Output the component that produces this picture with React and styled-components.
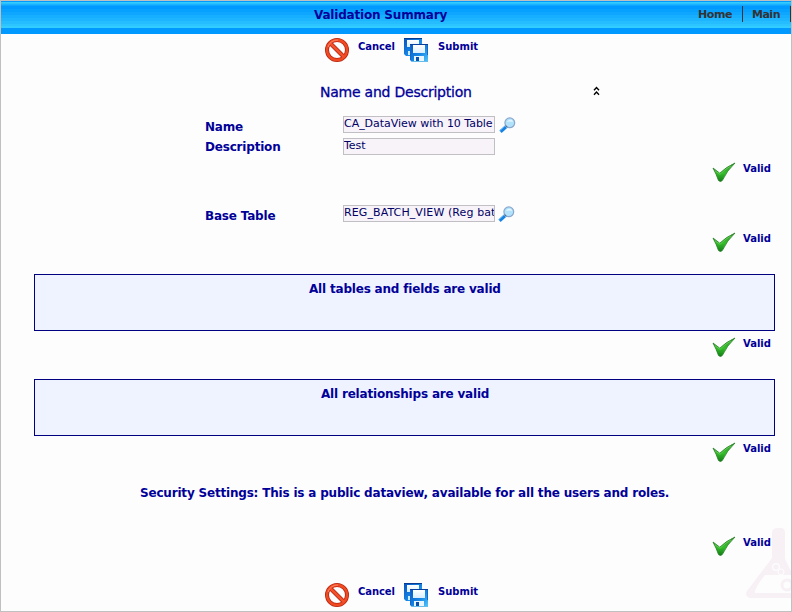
import React from "react";
import styled, { createGlobalStyle } from "styled-components";

const Global = createGlobalStyle`
  * { box-sizing: border-box; }
  body { margin: 0; background: #fdfdfd; }
`;

const Page = styled.div`
  position: relative;
  width: 792px;
  height: 612px;
  overflow: hidden;
  border: 1px solid #c0c0c0;
  background: #fdfdfd;
  color: #000099;
  font-family: "DejaVu Sans", Verdana, sans-serif;
  display: flex;
  flex-direction: column;
`;

const Header = styled.header`
  flex: none;
  height: 33px;
  display: flex;
  justify-content: space-between;
  padding-left: 313px;
  background: linear-gradient(
    #0099ff 0 1px, #33ccff 1px 2px, #2abfff 2px 3px, #1bb2ff 3px 4px, #0da5ff 4px 5px,
    #0099ff 5px 8px, #06a0ff 8px 11px, #0ea6ff 11px 14px, #16aeff 14px 17px,
    #1db5ff 17px 20px, #25bdff 20px 23px, #2cc5ff 23px 25px, #33ccff 25px 27px, #0099ff 27px 33px
  );
`;

const Text = styled.span`
  display: block;
  white-space: pre;
  font-size: ${(p) => p.$size || 12}px;
  font-weight: ${(p) => (p.$regular ? 400 : 700)};
  letter-spacing: ${(p) => p.$track ?? -0.19}px;
  line-height: 16px;
`;

const Title = styled(Text)`
  padding-top: 6px;
`;

const Nav = styled.nav`
  display: flex;
  padding-top: 5px;
  height: 21px;
  color: #333333;
`;

const NavItem = styled.a`
  display: flex;
  border-right: 1px solid #333333;
  width: ${(p) => p.$width}px;
  padding: 1px 0 0 ${(p) => p.$pad}px;
`;

const Actions = styled.div`
  flex: none;
  display: flex;
  height: 33px;
  padding: 4px 0 0 324px;
`;

const Action = styled.div`
  display: flex;
  width: 79px;
  svg { flex: none; }
`;

const ActionLabel = styled(Text)`
  margin-left: ${(p) => p.$gap}px;
  padding-top: 1px;
`;

const SectionHead = styled.div`
  flex: none;
  display: flex;
  height: 49px;
  padding: 17px 0 0 319px;
  svg { margin-top: 2px; }
`;

const SectionTitle = styled(Text)`
  width: 273px;
  -webkit-text-stroke: 0.3px #000099;
`;

const Fields = styled.div`
  flex: none;
  display: flex;
  flex-direction: column;
  gap: 5px;
  padding-left: 204px;
`;

const Field = styled.div`
  display: grid;
  grid-template-columns: 138px 152px 24px;
  height: 17px;
`;

const FieldLabel = styled(Text)`
  padding-top: ${(p) => p.$drop}px;
`;

const Input = styled.div`
  overflow: hidden;
  height: 17px;
  border: 1px solid #c0c0c4;
  background: #f8f3f8;
  color: #000066;
  padding-left: ${(p) => p.$pad || 0}px;
  ${Text} { line-height: 14px; }
`;

const Lookup = styled.span`
  padding: 1px 0 0 ${(p) => p.$left}px;
  height: 20px;
`;

const ValidRow = styled.div`
  flex: none;
  display: flex;
  height: ${(p) => p.$height}px;
  padding: ${(p) => p.$top}px 0 0 710px;
  svg { flex: none; margin-top: 1px; }
`;

const ValidLabel = styled(Text)`
  margin-left: 7px;
`;

const Panel = styled.section`
  flex: none;
  width: 741px;
  height: 57px;
  margin-left: 33px;
  padding: 6px 0 0 ${(p) => p.$left}px;
  border: 1px solid #000080;
  background: #eef3ff;
`;

const Security = styled.div`
  flex: none;
  height: 55px;
  padding: 17px 0 0 139px;
`;

const Watermark = styled.svg`
  position: absolute;
  right: 0;
  bottom: 8px;
`;

function ForbiddenIcon() {
  return (
    <svg width="24" height="24" viewBox="0 0 24 24">
      <circle cx="12" cy="12" r="10" fill="none" stroke="#b52410" strokeWidth="4" />
      <path d="M5.5 5.5 18.5 18.5" stroke="#b52410" strokeWidth="4.2" />
      <circle cx="12" cy="12" r="10" fill="none" stroke="#f04a22" strokeWidth="2.4" />
      <path d="M5 5 19 19" stroke="#f4512a" strokeWidth="2.5" />
      <path d="M3 9A9.5 9.5 0 0 1 13 2" fill="none" stroke="#ff8a68" strokeWidth="1" />
    </svg>
  );
}

function DisksIcon() {
  return (
    <svg width="24" height="24" viewBox="0 0 24 24">
      <defs>
        <linearGradient id="disk" x1="0" y1="0" x2="1" y2="1">
          <stop offset="0" stopColor="#0751c0" />
          <stop offset=".55" stopColor="#1686e4" />
          <stop offset="1" stopColor="#55c8fa" />
        </linearGradient>
        <linearGradient id="paper" x1="0" y1="0" x2="0" y2="1">
          <stop offset="0" stopColor="#ffffff" />
          <stop offset="1" stopColor="#d8edff" />
        </linearGradient>
      </defs>
      <path d="M0 0H18V18H2L0 16Z" fill="url(#disk)" />
      <path d="M0 .5H18" stroke="#063b91" />
      <path d="M3 2H15V9H3Z" fill="url(#paper)" />
      <path d="M4 13H6V17H4Z" fill="#c9edff" />
      <path d="M6 6H24V24H8L6 22Z" fill="url(#disk)" />
      <path d="M6 6.5H24" fill="none" stroke="#083f9d" />
      <path d="M6.5 7V22M23.5 7V17" stroke="#1269cc" />
      <path d="M9 7H21V15H9Z" fill="url(#paper)" />
      <path d="M10 18H20V24H10Z" fill="#e9f6ff" />
      <path d="M12 19H15V23H12Z" fill="#0751ad" />
      <path d="M8 23.5H24" stroke="#67bce9" />
    </svg>
  );
}

function MagnifierIcon() {
  return (
    <svg width="17" height="17" viewBox="0 0 17 17">
      <path d="M1.5 14.8 7 9.8" stroke="#1683e4" strokeWidth="3.3" />
      <path d="M1.2 13.7 6 9" stroke="#52aaf1" strokeWidth="1" />
      <circle cx="10.8" cy="5.8" r="4.9" fill="#b2e2fb" stroke="#8ba8ce" strokeWidth="1.2" />
      <path d="M8 5Q9 2.5 12 2.8Q14 3 14 5Q11 4 8 5Z" fill="#e2f6ff" />
      <path d="M6.6 8.5 8.4 10.2" stroke="#53657e" strokeWidth="1" />
    </svg>
  );
}

function CheckIcon() {
  return (
    <svg width="25" height="22" viewBox="0 0 25 22">
      <defs>
        <linearGradient id="check" x1="0" y1="0" x2="0" y2="1">
          <stop offset="0" stopColor="#3a9a30" />
          <stop offset=".55" stopColor="#35bd2a" />
          <stop offset="1" stopColor="#117c16" />
        </linearGradient>
      </defs>
      <path d="M2 6 8.8 11.2Q15 5 24 1Q16 8.5 11.3 18.5Q9.5 20.5 7.5 18.5Q5.5 12.5 2 6Z" fill="url(#check)" stroke="#217f20" strokeWidth=".8" />
      <path d="M4 8.8 9 12.3Q14 7.2 20 3.8" fill="none" stroke="#72d565" strokeWidth=".7" />
    </svg>
  );
}

function CollapseIcon() {
  return (
    <svg width="8" height="10" viewBox="0 0 8 10">
      <path d="M1 4.2 3.5 1.5 6 4.2M1 8.7 3.5 6 6 8.7" fill="none" stroke="#000" strokeWidth="1.4" />
    </svg>
  );
}

function ActionBar() {
  return (
    <Actions>
      <Action><ForbiddenIcon /><ActionLabel $gap={9} $size={10} $track={-0.1}>Cancel</ActionLabel></Action>
      <Action><DisksIcon /><ActionLabel $gap={10} $size={10} $track={0}>Submit</ActionLabel></Action>
    </Actions>
  );
}

function Valid({ height, top }) {
  return (
    <ValidRow $height={height} $top={top}>
      <CheckIcon />
      <ValidLabel $size={10} $track={0}>Valid</ValidLabel>
    </ValidRow>
  );
}

export default function App() {
  return (
    <>
      <Global />
      <Page>
        <Watermark width="46" height="76" viewBox="0 0 46 76">
          <path d="M27 6Q27 1 33 1H36Q40 1 40 6V32L46 44V71H5Q-1 69 2 64L27 31Z" fill="#f7f1f6" />
          <path d="M20 48H46V66H10Q9 62 20 48Z" fill="#fdfdfd" />
          <circle cx="31" cy="40" r="3.3" fill="none" stroke="#fdfdfd" strokeWidth="1.3" />
          <circle cx="36" cy="45" r="3" fill="#f7f1f6" stroke="#fdfdfd" />
          <circle cx="42" cy="58" r="5" fill="none" stroke="#f7f1f6" strokeWidth="3" />
        </Watermark>
        <Header>
          <Title>Validation Summary</Title>
          <Nav>
            <NavItem $width={45} $pad={0}><Text $size={11} $track={-0.4}>Home</Text></NavItem>
            <NavItem $width={48} $pad={9}><Text $size={11} $track={-0.5}>Main</Text></NavItem>
          </Nav>
        </Header>
        <ActionBar />
        <SectionHead>
          <SectionTitle $regular $size={14} $track={-0.23}>Name and Description</SectionTitle>
          <CollapseIcon />
        </SectionHead>
        <Fields>
          <Field>
            <FieldLabel $drop={3}>Name</FieldLabel>
            <Input $pad={0}><Text $regular $size={11} $track={-0.03}>CA_DataView with 10 Table</Text></Input>
            <Lookup $left={4}><MagnifierIcon /></Lookup>
          </Field>
          <Field>
            <FieldLabel $drop={1}>Description</FieldLabel>
            <Input><Text $regular $size={11} $track={0}>Test</Text></Input>
          </Field>
        </Fields>
        <Valid height={50} top={6} />
        <Fields>
          <Field>
            <FieldLabel $drop={3}>Base Table</FieldLabel>
            <Input $pad={0}><Text $regular $size={11} $track={0.1}>REG_BATCH_VIEW (Reg batch</Text></Input>
            <Lookup $left={3}><MagnifierIcon /></Lookup>
          </Field>
        </Fields>
        <Valid height={52} top={9} />
        <Panel $left={274}><Text>All tables and fields are valid</Text></Panel>
        <Valid height={48} top={5} />
        <Panel $left={286}><Text>All relationships are valid</Text></Panel>
        <Valid height={32} top={5} />
        <Security><Text>Security Settings: This is a public dataview, available for all the users and roles.</Text></Security>
        <Valid height={56} top={12} />
        <ActionBar />
      </Page>
    </>
  );
}
